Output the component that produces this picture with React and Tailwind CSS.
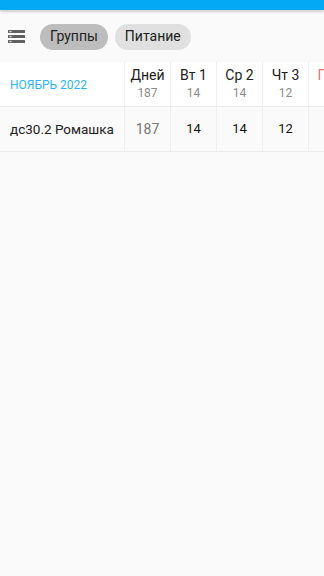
import React from 'react';

const days = [
  { label: 'Дней', total: '187', value: '187', muted: true },
  { label: 'Вт 1', total: '14', value: '14' },
  { label: 'Ср 2', total: '14', value: '14' },
  { label: 'Чт 3', total: '12', value: '12' },
  { label: 'Пт 4', total: '14', value: '14', red: true },
];

const ListIcon = () => (
  <svg width="17" height="13" viewBox="0 0 17 13">
    {[0, 5, 10].map((y) => (
      <g key={y}>
        <rect x="0" y={y} width="17" height="3" rx="0.5" fill="#616161" />
        <rect x="1.5" y={y + 0.8} width="2" height="1.4" fill="#d6d6d6" />
      </g>
    ))}
  </svg>
);

export default function App() {
  return (
    <div className="min-h-[576px] w-[324px] overflow-hidden bg-[#fafafa] font-['Roboto',sans-serif]">
      <div className="h-[10px] bg-[#03a9f4] shadow-[0_2px_3px_rgba(0,0,0,0.18)]" />

      <div className="flex h-[52px] items-center gap-[7px] pt-[1px] pl-[8px]">
        <div className="mr-[8px] flex items-center">
          <ListIcon />
        </div>
        <div className="flex h-[26px] items-center rounded-full bg-[#bdbdbd] px-[10px] text-[14px] text-[#212121]">
          Группы
        </div>
        <div className="flex h-[26px] items-center rounded-full bg-[#e0e0e0] px-[10px] text-[14px] text-[#212121]">
          Питание
        </div>
      </div>

      <div className="flex">
        <div className="w-[124px] shrink-0">
          <div className="flex h-[45px] items-center border-b border-[#eeeeee] bg-white pl-[10px] pt-[1px] text-[12px] text-[#29b6f6]">
            НОЯБРЬ 2022
          </div>
          <div className="flex h-[45px] items-center border-b border-[#eeeeee] pl-[10px] text-[13.5px] text-[#212121]">
            дс30.2 Ромашка
          </div>
        </div>
        {days.map((d) => (
          <div key={d.label} className="w-[46px] shrink-0 border-l border-[#eeeeee]">
            <div className="flex h-[45px] flex-col items-center justify-center border-b border-[#eeeeee] bg-white">
              <span className={`text-[14px] leading-[18px] ${d.red ? 'text-[#e57373]' : 'text-[#212121]'}`}>
                {d.label}
              </span>
              <span className="text-[12px] leading-[19px] text-[#8a8a8a]">{d.total}</span>
            </div>
            <div className="flex h-[45px] items-center justify-center border-b border-[#eeeeee]">
              <span className={d.muted ? 'text-[14px] text-[#757575]' : 'text-[13px] text-[#111111]'}>
                {d.value}
              </span>
            </div>
          </div>
        ))}
      </div>
    </div>
  );
}
